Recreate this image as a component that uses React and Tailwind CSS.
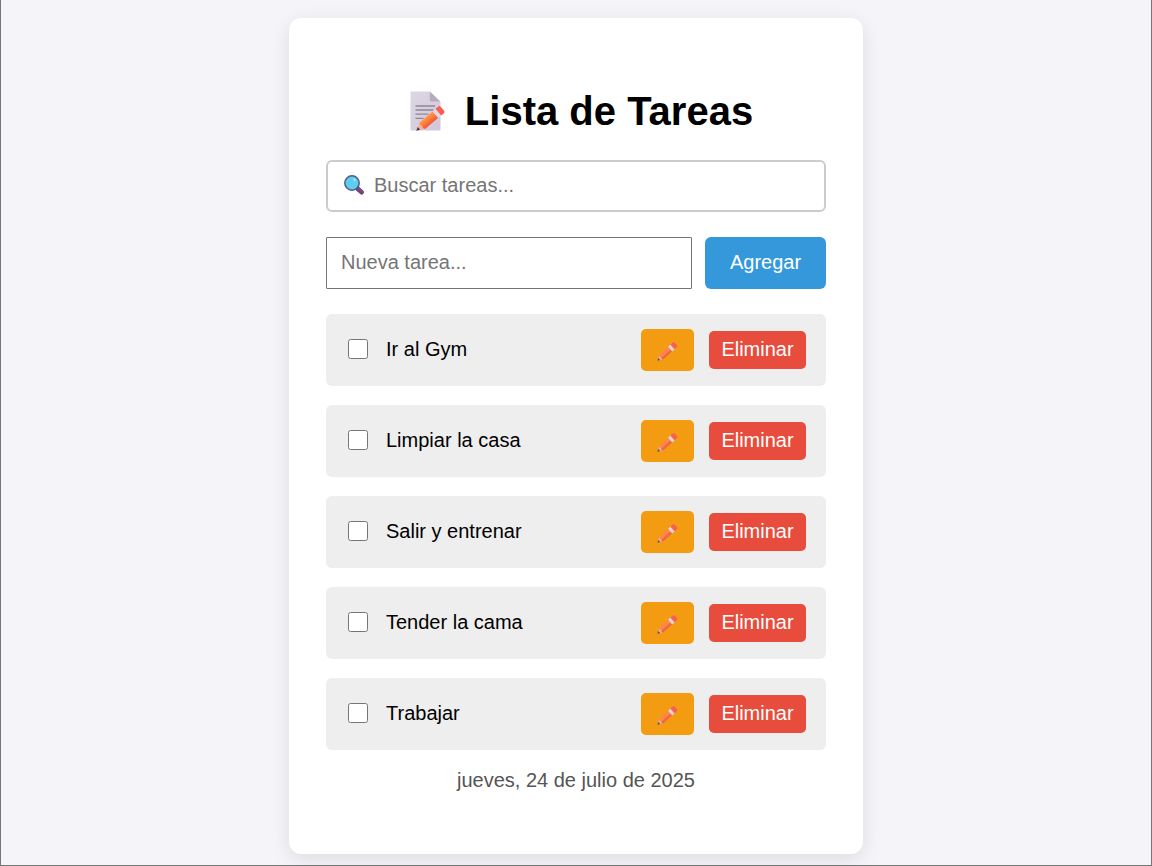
import { useState } from 'react';

const initialTasks = [
  { id: 1, text: 'Ir al Gym', done: false },
  { id: 2, text: 'Limpiar la casa', done: false },
  { id: 3, text: 'Salir y entrenar', done: false },
  { id: 4, text: 'Tender la cama', done: false },
  { id: 5, text: 'Trabajar', done: false },
];

function MemoIcon() {
  return (
    <svg className="h-10 w-9 shrink-0" viewBox="0 0 36 40" aria-hidden="true">
      <defs>
        <linearGradient id="memo-page" x1="0" y1="0" x2="1" y2="1">
          <stop offset="0" stopColor="#dcd8e3" />
          <stop offset="1" stopColor="#d3c5da" />
        </linearGradient>
        <linearGradient id="memo-pencil" x1="0" y1="0" x2="0" y2="1">
          <stop offset="0" stopColor="#ff9a4a" />
          <stop offset="0.500" stopColor="#ff7a38" />
          <stop offset="1" stopColor="#ee5a35" />
        </linearGradient>
      </defs>
      <path d="M1.500 0.500h19L31.500 11v27.500a1 1 0 0 1-1 1h-28a1 1 0 0 1-1-1z" fill="url(#memo-page)" />
      <path d="M20.800 0.500 31.500 10.500H22.300a1.500 1.500 0 0 1-1.500-1.500z" fill="#b5abbc" />
      <path d="M6.500 15h19.500M6.500 19h18M6.500 23.200h13M6.500 27.400h8" stroke="#8f8797" strokeWidth="1.300" />
      {/* Drawn flat from the tip, then turned */}
      <g transform="translate(7.500 39.500) rotate(-40)">
        <path d="M0 0 8-4.200v8.400z" fill="#efb497" />
        <path d="M-.3 0 3.200-1.800v3.600z" fill="#54304f" />
        <path d="M7.500-4.200H25v8.400H7.500l-1-2.100L7.500 0l-1-2z" fill="url(#memo-pencil)" />
        <path d="M24.500-4.400h4.200v8.800h-4.200z" fill="#e0d8ea" />
        <path d="M28.500-4.400h3.300a2 2 0 0 1 2 2v4.800a2 2 0 0 1-2 2h-3.300z" fill="#ff5c50" />
      </g>
    </svg>
  );
}

function SearchIcon() {
  return (
    <svg
      className="pointer-events-none absolute inset-y-0 left-4 my-auto h-6 w-6"
      viewBox="0 0 24 24"
      aria-hidden="true"
    >
      <path d="m15.500 14.500 4.200 3.800" stroke="#704078" strokeWidth="4.600" strokeLinecap="round" />
      <path d="m17 14.800 3.600 3.200" stroke="#8b4b90" strokeWidth="1.500" strokeLinecap="round" />
      <path d="m13.500 12.500 2 2" stroke="#594968" strokeWidth="2" />
      <circle cx="10" cy="9" r="7.200" fill="#60cdec" stroke="#4f598f" strokeWidth="1.500" />
      <ellipse cx="12.500" cy="5.800" rx="1.500" ry="1.100" fill="#a9e5f5" transform="rotate(40 12.500 5.800)" />
    </svg>
  );
}

function PencilIcon() {
  return (
    <svg className="h-6 w-6" viewBox="0 0 24 24" aria-hidden="true">
      <g transform="translate(1.500 22.500) rotate(-42)">
        <path d="M0 0 5.500-3v6z" fill="#e0b29e" />
        <path d="M-.2 0 2.300-1.300v2.600z" fill="#694050" />
        <path d="M5-3h12.500v6H5l-.8-1.500L5 0l-.8-1.500z" fill="#ff8548" />
        <path d="M5 .6h12.500V3H5l-.8-1.500z" fill="#f0683f" />
        <path d="M17-3.100h3.400v6.200H17z" fill="#e2d5dd" />
        <path d="M20.200-3.100h3.100a1.500 1.500 0 0 1 1.500 1.500v3.200a1.500 1.500 0 0 1-1.500 1.500h-3.100z" fill="#fb5f50" />
      </g>
    </svg>
  );
}

function TaskItem({ task, onToggle, onEdit, onRemove }) {
  return (
    <li className="flex h-[72px] items-center rounded-md bg-[#eeeeee] px-5">
      <label className="flex flex-1 items-center gap-[18px] pb-0.5 pl-0.5">
        <input
          type="checkbox"
          checked={task.done}
          onChange={() => onToggle(task.id)}
          className="h-5 w-5"
        />
        <span className={task.done ? 'line-through' : ''}>{task.text}</span>
      </label>

      <div className="flex items-center gap-[15px]">
        <button
          type="button"
          aria-label={`Editar ${task.text}`}
          onClick={() => onEdit(task)}
          className="flex h-[42px] w-[53px] items-center justify-center rounded-[5px] bg-[#f39c12]"
        >
          <PencilIcon />
        </button>
        <button
          type="button"
          onClick={() => onRemove(task.id)}
          className="h-[38px] w-[97px] rounded-[5px] bg-[#e74c3c] pb-0.5 text-white"
        >
          Eliminar
        </button>
      </div>
    </li>
  );
}

function App() {
  const [tasks, setTasks] = useState(initialTasks);
  const [search, setSearch] = useState('');
  const [newTask, setNewTask] = useState('');

  const visibleTasks = tasks.filter((task) =>
    task.text.toLowerCase().includes(search.toLowerCase())
  );

  const addTask = (e) => {
    e.preventDefault();
    const text = newTask.trim();
    if (!text) return;
    setTasks([...tasks, { id: Date.now(), text, done: false }]);
    setNewTask('');
  };

  const toggleTask = (id) =>
    setTasks(tasks.map((task) => (task.id === id ? { ...task, done: !task.done } : task)));

  // Editing puts the text back in the form
  const editTask = (task) => {
    setNewTask(task.text);
    setTasks(tasks.filter((item) => item.id !== task.id));
  };

  const removeTask = (id) => setTasks(tasks.filter((task) => task.id !== id));

  return (
    <div className="min-h-screen border-x border-b border-[#777777] bg-[#f4f4f9] pt-[18px] pb-[11px] font-['Liberation_Sans',Arial,sans-serif] text-xl text-black">
      <main className="mx-auto max-w-[574px] rounded-xl bg-white px-[37px] pt-[69px] pb-[60px] shadow-[0_5px_19px_rgba(0,0,0,0.1)]">
        <h1 className="flex items-center justify-center gap-5 pl-2.5 text-[40px] leading-12 font-bold">
          <MemoIcon />
          Lista de Tareas
        </h1>

        <div className="relative mt-[25px]">
          <SearchIcon />
          <input
            type="text"
            aria-label="Buscar tareas"
            placeholder="Buscar tareas..."
            value={search}
            onChange={(e) => setSearch(e.target.value)}
            className="h-[52px] w-full rounded-md border-2 border-[#cccccc] pr-4 pb-0.5 pl-[46px] placeholder:text-[#757575]"
          />
        </div>

        <form onSubmit={addTask} className="mt-[25px] flex gap-[13px]">
          <input
            type="text"
            aria-label="Nueva tarea"
            placeholder="Nueva tarea..."
            value={newTask}
            onChange={(e) => setNewTask(e.target.value)}
            className="h-[52px] min-w-0 flex-1 rounded-[1px] border border-[#767676] px-[14px] pb-0.5 placeholder:text-[#757575]"
          />
          <button type="submit" className="h-[52px] w-[121px] rounded-md bg-[#3498db] pb-0.5 text-white">
            Agregar
          </button>
        </form>

        <ul className="mt-[25px] flex flex-col gap-[19px]">
          {visibleTasks.map((task) => (
            <TaskItem
              key={task.id}
              task={task}
              onToggle={toggleTask}
              onEdit={editTask}
              onRemove={removeTask}
            />
          ))}
        </ul>

        <p className="mt-4 text-center text-[#555555]">jueves, 24 de julio de 2025</p>
      </main>
    </div>
  );
}

export default App;
